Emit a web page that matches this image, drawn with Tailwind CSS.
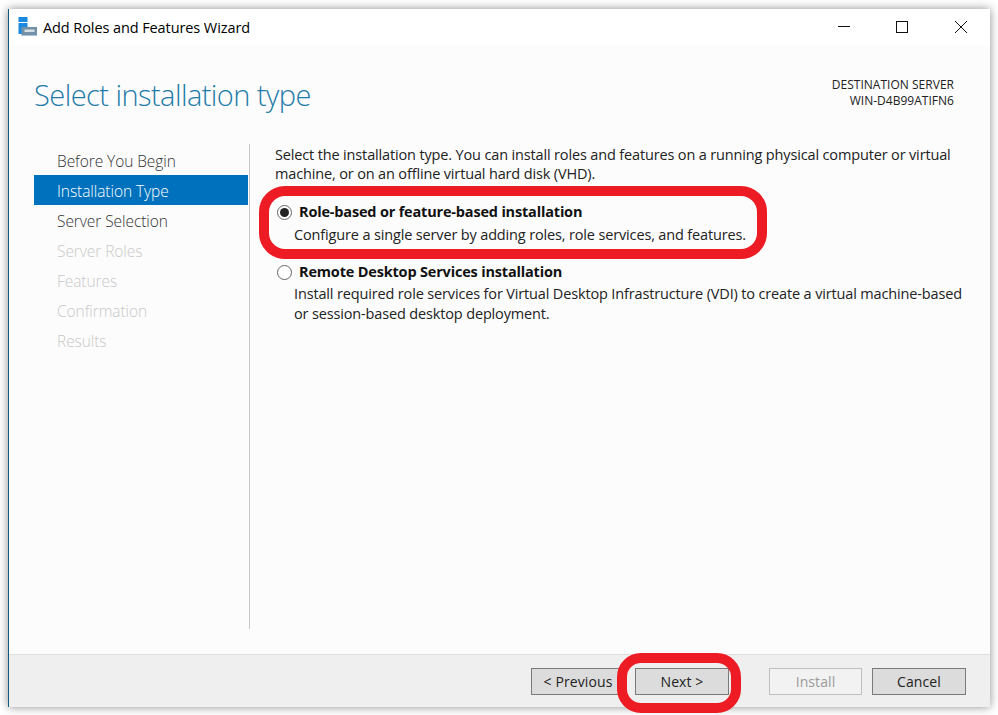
<!DOCTYPE html>
<html lang="en">
  <head>
    <meta charset="UTF-8" />
    <title>Add Roles and Features Wizard</title>
    <script src="https://cdn.jsdelivr.net/npm/@tailwindcss/browser@4"></script>
  </head>
  <body class="bg-white w-[998px] h-[715px] overflow-hidden font-['Open_Sans','Noto_Sans',sans-serif]">
    <div class="pt-[9px] pl-[8px]">
      <!-- Window -->
      <div class="relative w-[982px] h-[698px] flex flex-col border-l border-l-[#0f5a7e] shadow-[0_0_9px_rgba(0,0,0,0.45)]">
        <!-- Title bar -->
        <header class="h-[37px] bg-white flex items-center shrink-0">
          <svg class="ml-[9px] mt-[-1px]" width="20" height="20" viewBox="0 0 20 20">
            <rect x="0.5" y="0" width="9" height="5" fill="#1a8ae0" />
            <rect x="0.5" y="6" width="9" height="11" fill="#1a8ae0" />
            <rect x="3.5" y="10" width="15.5" height="9" fill="#7390a6" />
            <rect x="6.5" y="12.5" width="10" height="2.5" fill="#d5dfe6" />
            <rect x="3.5" y="18" width="15.5" height="1" fill="#a9c4da" />
          </svg>
          <span class="ml-[5px] text-[14.5px] tracking-[-0.09px] text-black">Add Roles and Features Wizard</span>
          <div class="ml-auto flex items-center mt-[-1px]">
            <svg width="14" height="14" viewBox="0 0 14 14" class="mr-[44px]"><path d="M1 6.5h12" stroke="#111" /></svg>
            <svg width="14" height="14" viewBox="0 0 14 14" class="mr-[45px]"><rect x="1.5" y="1.5" width="11" height="11" fill="none" stroke="#111" /></svg>
            <svg width="14" height="14" viewBox="0 0 14 14" class="mr-[22px]"><path d="M1 1l12 12M13 1L1 13" stroke="#111" /></svg>
          </div>
        </header>

        <!-- Body -->
        <main class="relative flex-1 bg-[#fcfcfc] flex flex-col min-h-0">
          <div class="flex justify-between h-[98px] shrink-0">
            <h1 class="ml-[25px] mt-[29px] text-[29px] leading-[40px] font-light tracking-[-0.55px] text-[#1f7ba8]">Select installation type</h1>
            <div class="mr-[36px] mt-[31px] text-right text-[12px] leading-[16px] tracking-[0.02px] text-[#222]">
              <div>DESTINATION SERVER</div>
              <div>WIN-D4B99ATIFN6</div>
            </div>
          </div>
          <div class="flex">
            <!-- Steps -->
            <nav class="ml-[25px] mt-[1px] w-[214px] text-[15.5px] font-light tracking-[-0.07px]">
              <div class="h-[30px] leading-[32px] pl-[23px] text-[#333]">Before You Begin</div>
              <div class="h-[30px] leading-[32px] pl-[23px] bg-[#0071bc] text-white">Installation Type</div>
              <div class="h-[30px] leading-[32px] pl-[23px] text-[#333]">Server Selection</div>
              <div class="h-[30px] leading-[32px] pl-[23px] text-[#c9c9c9]">Server Roles</div>
              <div class="h-[30px] leading-[32px] pl-[23px] text-[#c9c9c9]">Features</div>
              <div class="h-[30px] leading-[32px] pl-[23px] text-[#c9c9c9]">Confirmation</div>
              <div class="h-[30px] leading-[32px] pl-[23px] text-[#c9c9c9]">Results</div>
            </nav>
            <!-- Content -->
            <section class="ml-[1px] h-[485px] border-l border-l-[#c8c8c8] pl-[25px] w-[720px] text-[14.5px] tracking-[-0.15px] text-[#222]">
              <p class="leading-[19px] pt-[1px] w-[690px]">Select the installation type. You can install roles and features on a running physical computer or virtual machine, or on an offline virtual hard disk (VHD).</p>
              <div class="mt-[19px] flex items-center h-[20px]">
                <span class="w-[15px] h-[15px] ml-[2px] rounded-full border border-[#666] bg-white flex items-center justify-center"><span class="w-[9px] h-[9px] rounded-full bg-[#222]"></span></span>
                <span class="ml-[7px] font-bold text-[#111] tracking-[-0.18px]">Role-based or feature-based installation</span>
              </div>
              <p class="ml-[19px] mt-[3px] leading-[20px]">Configure a single server by adding roles, role services, and features.</p>
              <div class="mt-[17px] flex items-center h-[20px]">
                <span class="w-[15px] h-[15px] ml-[2px] rounded-full border border-[#666] bg-white"></span>
                <span class="ml-[7px] font-bold text-[#111] tracking-[-0.18px]">Remote Desktop Services installation</span>
              </div>
              <p class="ml-[19px] mt-[2px] leading-[20px] w-[680px]">Install required role services for Virtual Desktop Infrastructure (VDI) to create a virtual machine-based or session-based desktop deployment.</p>
            </section>
          </div>
        </main>

        <!-- Footer -->
        <footer class="h-[53px] shrink-0 bg-[#efefef] border-t border-t-[#dfdfdf] flex items-center text-[14px] tracking-[0.1px]">
          <button class="ml-[522px] w-[94px] h-[27px] bg-[#dcdcdc] border border-[#7a7a7a] text-[#222] mt-[1px]">&lt; Previous</button>
          <button class="ml-[10px] w-[94px] h-[27px] bg-[#dcdcdc] border border-[#7a7a7a] text-[#222] mt-[1px]">Next &gt;</button>
          <button class="ml-[40px] w-[93px] h-[27px] bg-[#f2f2f2] border border-[#c0c0c0] text-[#9a9a9a] mt-[1px]">Install</button>
          <button class="ml-[10px] w-[94px] h-[27px] bg-[#dcdcdc] border border-[#7a7a7a] text-[#222] mt-[1px]">Cancel</button>
        </footer>

        <!-- Red callouts -->
        <div class="absolute left-[250px] top-[177px] w-[508px] h-[73px] rounded-[26px] border-[10px] border-[#ed1c24]"></div>
        <div class="absolute left-[608px] top-[644px] w-[124px] h-[60px] rounded-[24px] border-[10px] border-[#ed1c24]"></div>
      </div>
    </div>
  </body>
</html>
